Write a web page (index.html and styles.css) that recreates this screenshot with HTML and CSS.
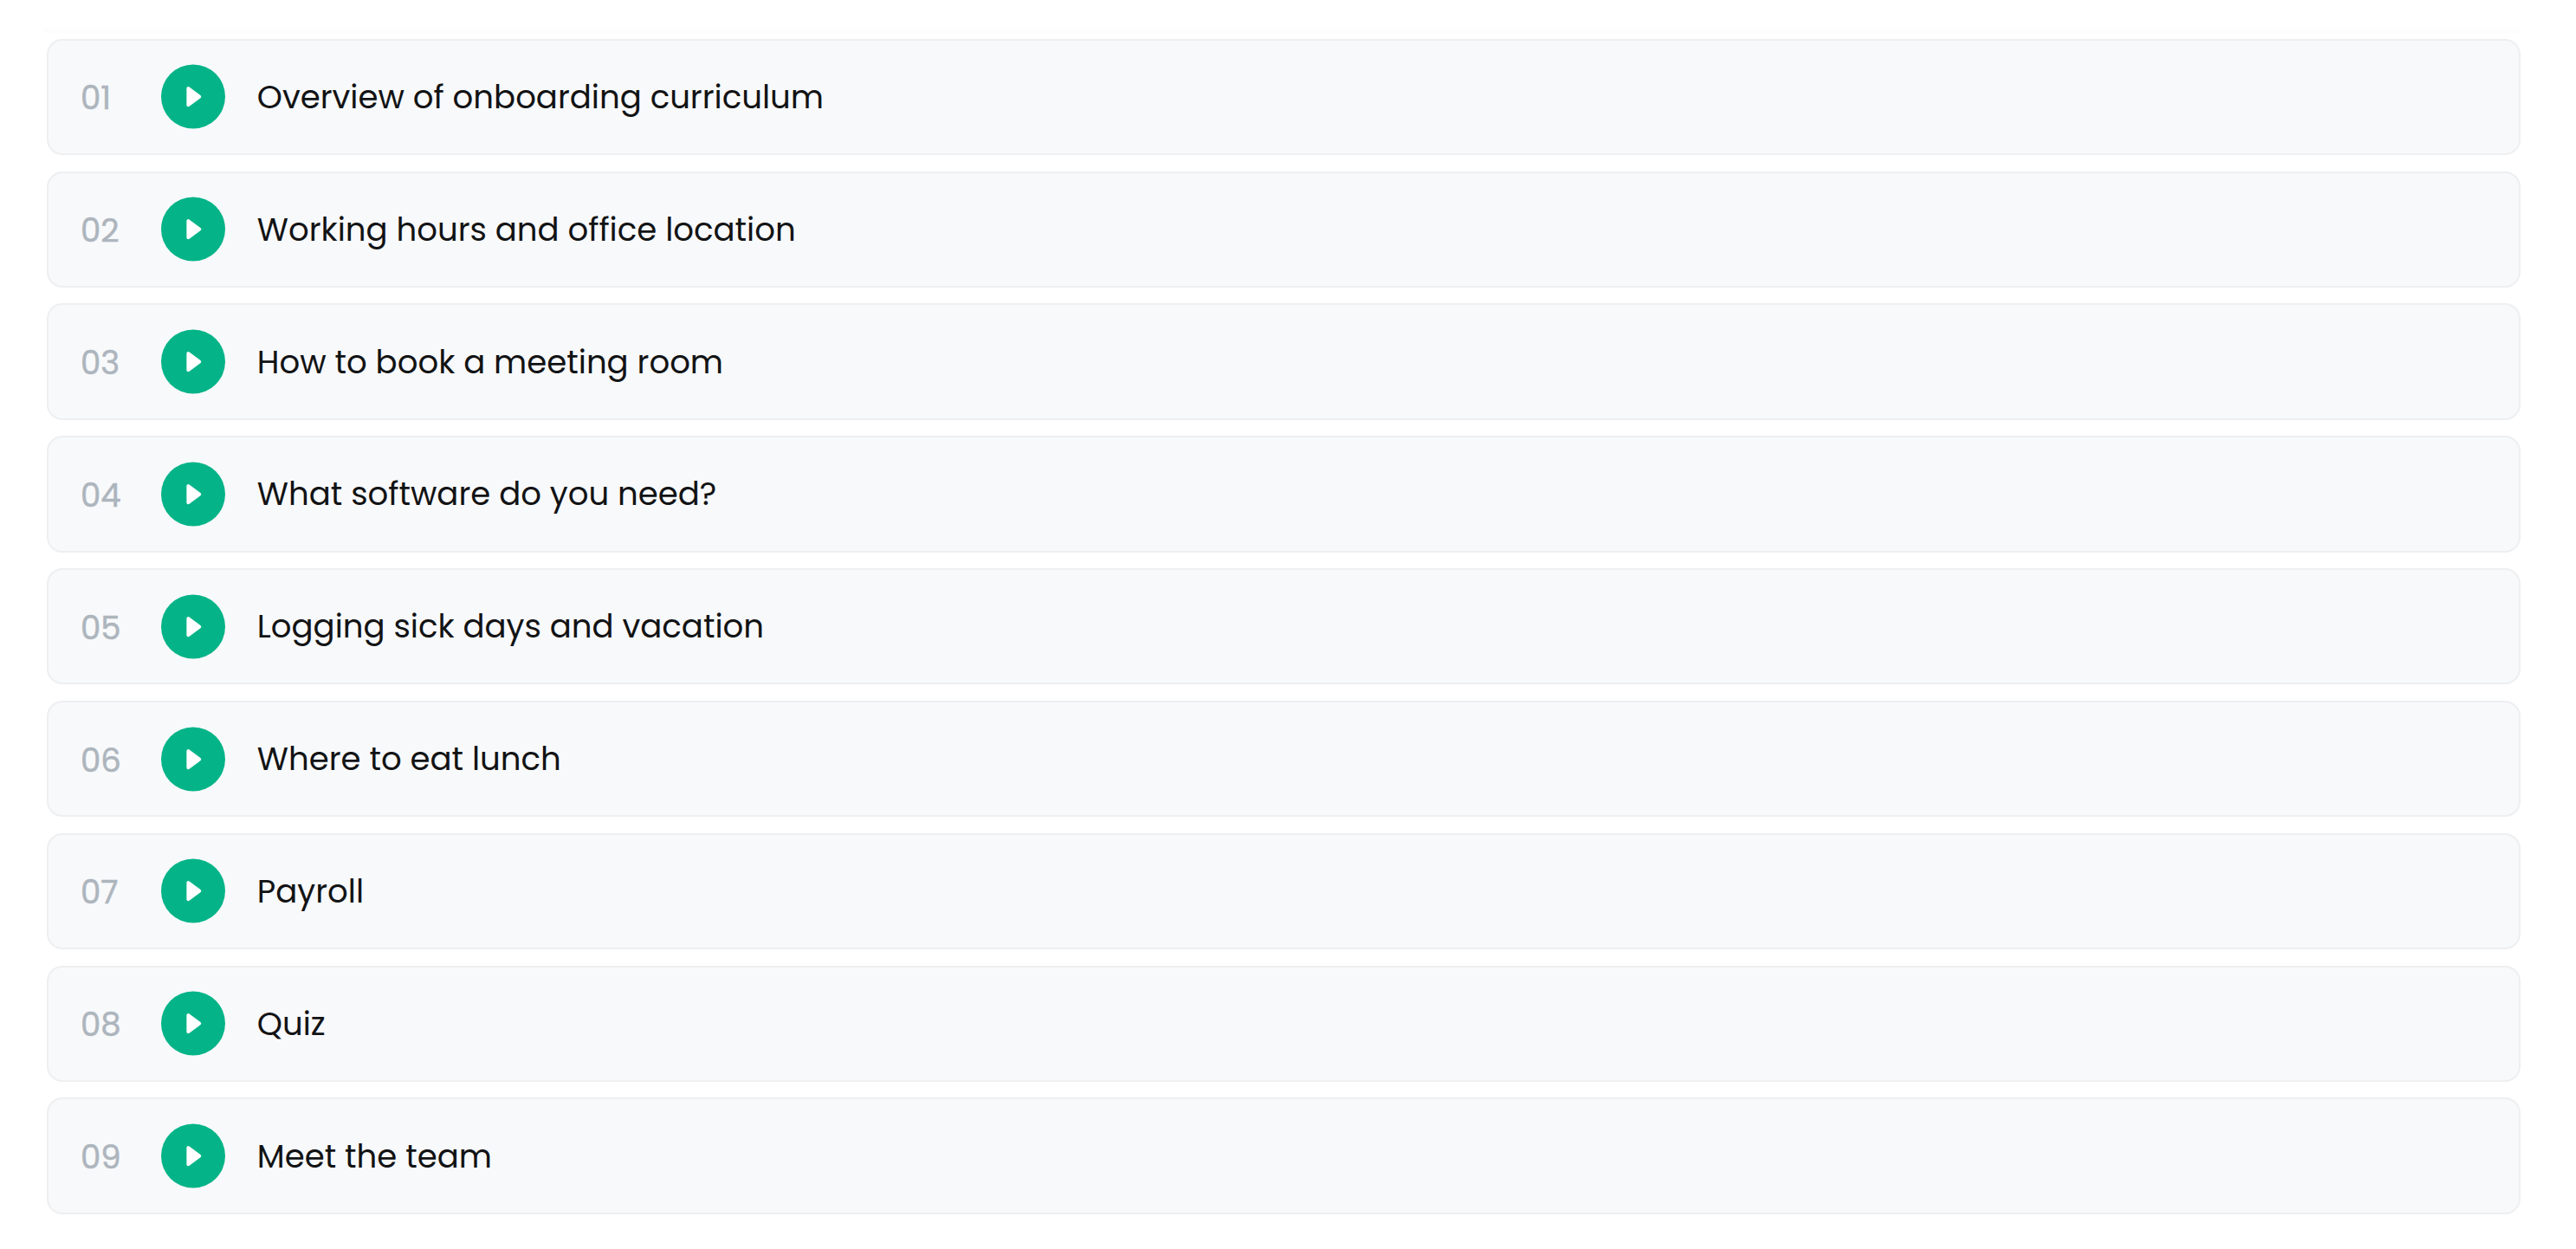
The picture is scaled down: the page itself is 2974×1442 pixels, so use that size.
FILE: index.html
```html
<!DOCTYPE html>
<html lang="en">
<head>
<meta charset="utf-8">
<title>Onboarding curriculum</title>
<link rel="stylesheet" href="styles.css">
</head>
<body>
<svg class="sprite" aria-hidden="true">
  <symbol id="play" viewBox="0 0 74 75">
    <circle cx="37" cy="37.5" r="37"/>
    <path d="M31.4 28.2 V47.2 L44.2 37.7 Z"/>
  </symbol>
</svg>
<main class="page">
  <div class="divider"></div>
  <ol class="lessons">
    <li class="lesson"><span class="number">01</span><svg class="play"><use href="#play"/></svg><span class="title">Overview of onboarding curriculum</span></li>
    <li class="lesson"><span class="number">02</span><svg class="play"><use href="#play"/></svg><span class="title">Working hours and office location</span></li>
    <li class="lesson"><span class="number">03</span><svg class="play"><use href="#play"/></svg><span class="title">How to book a meeting room</span></li>
    <li class="lesson"><span class="number">04</span><svg class="play"><use href="#play"/></svg><span class="title">What software do you need?</span></li>
    <li class="lesson"><span class="number">05</span><svg class="play"><use href="#play"/></svg><span class="title">Logging sick days and vacation</span></li>
    <li class="lesson"><span class="number">06</span><svg class="play"><use href="#play"/></svg><span class="title">Where to eat lunch</span></li>
    <li class="lesson"><span class="number">07</span><svg class="play"><use href="#play"/></svg><span class="title">Payroll</span></li>
    <li class="lesson"><span class="number">08</span><svg class="play"><use href="#play"/></svg><span class="title">Quiz</span></li>
    <li class="lesson"><span class="number">09</span><svg class="play"><use href="#play"/></svg><span class="title">Meet the team</span></li>
  </ol>
</main>
</body>
</html>
```
FILE: styles.css
```css
* {
  box-sizing: border-box;
}

body {
  margin: 0;
  background: #fff;
  font-family: Poppins, Inter, sans-serif;
  font-size: 37.1px;
  line-height: 46px;
}

.sprite {
  display: none;
}

.page {
  padding: 32px 64px 0 49px;
}

.divider {
  height: 6px;
  background: #fdfdfd;
}

.lessons {
  display: flex;
  flex-direction: column;
  gap: 18.5px;
  margin: 0;
  padding: 6.7px 0 0 4.5px;
  list-style: none;
}

.lesson {
  display: flex;
  align-items: center;
  height: 134.35px;
  padding-left: 37.5px;
  border: 2px solid #eeeff1;
  border-radius: 18px;
  background: #f8f9fb;
}

.number {
  width: 93px;
  padding-top: 3px;
  color: #adb5bd;
  -webkit-text-stroke: 0.5px #adb5bd;
}

.play {
  width: 74px;
  height: 75px;
  fill: #04b488;
}

#play path {
  fill: #fff;
  stroke: #fff;
  stroke-width: 4;
  stroke-linejoin: round;
}

.title {
  margin-left: 36.8px;
  color: #121314;
}
```
